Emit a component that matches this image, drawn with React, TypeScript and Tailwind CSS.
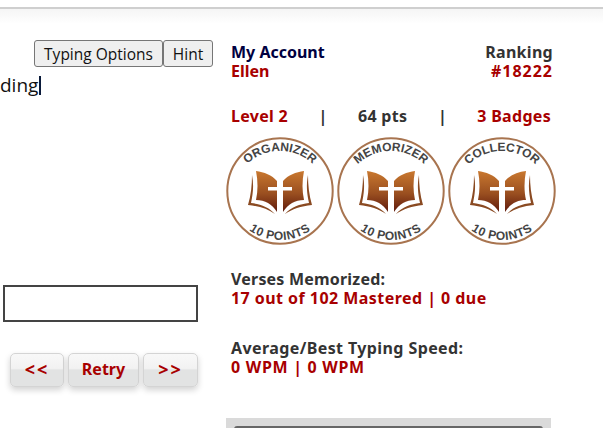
import React from 'react';

const Badge = ({ title, id }: { title: string; id: string }) => (
  <svg width="108" height="108" viewBox="0 0 108 108" className="shrink-0">
    <defs>
      <linearGradient id={`book-${id}`} x1="0" y1="0" x2="0" y2="1">
        <stop offset="0" stopColor="#c9782f" />
        <stop offset="0.55" stopColor="#9a4f20" />
        <stop offset="1" stopColor="#5f1a0c" />
      </linearGradient>
      <path id={`top-${id}`} d="M 6 62 A 48 48 0 0 1 102 62" />
      <path id={`bot-${id}`} d="M 1 50 A 53 53 0 0 0 107 50" />
    </defs>
    <circle cx="54" cy="54" r="52.7" fill="#fff" stroke="#a8744f" strokeWidth="2" />
    <text fontFamily="'Liberation Sans', sans-serif" fontSize="12" fill="#444">
      <textPath href={`#top-${id}`} startOffset="50%" textAnchor="middle">{title}</textPath>
    </text>
    <text fontFamily="'Liberation Sans', sans-serif" fontSize="12" letterSpacing="0.5" fill="#444">
      <textPath href={`#bot-${id}`} startOffset="50%" textAnchor="middle">10 POINTS</textPath>
    </text>
    {/* open book */}
    <path d="M 51 44 C 46 38 38 35 30 34 C 32 44 32 54 30 63 C 39 63 46 67 51 75 Z" fill={`url(#book-${id})`} />
    <path d="M 57 44 C 62 38 70 35 78 34 C 76 44 76 54 78 63 C 69 63 62 67 57 75 Z" fill={`url(#book-${id})`} />
    <path d="M 26 38 C 28 48 27 57 25 66 C 34 67 43 70 49 77 C 42 72 33 69 22 68 C 25 58 26 48 26 38 Z" fill="#8a4a22" />
    <path d="M 82 38 C 80 48 81 57 83 66 C 74 67 65 70 59 77 C 66 72 75 69 86 68 C 83 58 82 48 82 38 Z" fill="#8a4a22" />
    <rect x="52" y="43" width="4" height="29" fill="#fff" />
    <rect x="42" y="50" width="24" height="3.5" fill="#fff" />
  </svg>
);

const NavButton = ({ label, className }: { label: string; className: string }) => (
  <button className={`h-[34px] rounded-[5px] border border-[#d4d4d4] bg-[linear-gradient(#f8f8f8_0%,#f2f2f2_45%,#e2e3e3_50%,#e2e3e3_100%)] pb-[2px] text-[#a80000] font-bold shadow-[0_3px_6px_rgba(0,0,0,0.18)] ${className}`}>
    {label}
  </button>
);

export default function App() {
  return (
    <div className="h-[428px] w-[603px] overflow-hidden bg-white font-['Noto_Sans',sans-serif]">
      <div className="h-[24px] border-t-[7px] border-white">
        <div className="h-[17px] border-t-2 border-[#cfcfcf] bg-gradient-to-b from-[#f5f5f5] to-white" />
      </div>

      <div className="flex">
        <div className="w-[213px] shrink-0 pt-[16px]">
          <div className="flex justify-end font-['Open_Sans',sans-serif] text-[15.5px] text-[#111]">
            <button className="h-[27px] w-[129px] rounded-[3px] border border-[#767676] bg-[#efefef] pt-[2px]">Typing Options</button>
            <button className="h-[27px] w-[50px] rounded-[3px] border border-[#767676] bg-[#efefef] pt-[2px]">Hint</button>
          </div>
          <div className="mt-[6px] flex h-[24px] items-center font-['Open_Sans',sans-serif] text-[19px] leading-none text-[#111]">
            ding<span className="ml-px h-[19px] w-[2px] bg-[#0a1a3a]" />
          </div>
          <div className="ml-[3px] mt-[188px] h-[37px] w-[195px] border-2 border-[#444]" />
          <div className="ml-[10px] mt-[31px] flex gap-[4px]">
            <NavButton label="<<" className="w-[54px] text-[18px] tracking-[2px]" />
            <NavButton label="Retry" className="w-[71px] text-[16px]" />
            <NavButton label=">>" className="w-[55px] text-[18px] tracking-[2px]" />
          </div>
        </div>

        <div className="ml-[13px] w-[325px] pt-[19px] text-[16px] leading-[19px] font-bold">
          <div className="-mr-[2px] flex justify-between pl-[5px]">
            <div>
              <div className="text-[#000040]">My Account</div>
              <div className="text-[#a80000]">Ellen</div>
            </div>
            <div className="text-right">
              <div className="tracking-[0.3px] text-[#333]">Ranking</div>
              <div className="tracking-[1px] text-[#a80000]">#18222</div>
            </div>
          </div>

          <div className="mt-[26px] flex justify-between pl-[5px]">
            <span className="tracking-[0.3px] text-[#a80000]">Level 2</span>
            <span className="text-[#333]">|</span>
            <span className="tracking-[0.3px] text-[#333]">64 pts</span>
            <span className="text-[#333]">|</span>
            <span className="tracking-[0.3px] text-[#a80000]">3 Badges</span>
          </div>

          <div className="mt-[11px] flex gap-[3px]">
            <Badge title="ORGANIZER" id="a" />
            <Badge title="MEMORIZER" id="b" />
            <Badge title="COLLECTOR" id="c" />
          </div>

          <div className="mt-[25px] pl-[5px]">
            <div className="tracking-[0.2px] text-[#333]">Verses Memorized:</div>
            <div className="tracking-[0.45px] text-[#a80000]">17 out of 102 Mastered | 0 due</div>
          </div>

          <div className="mt-[31px] pl-[5px]">
            <div className="tracking-[0.4px] text-[#333]">Average/Best Typing Speed:</div>
            <div className="tracking-[0.7px] text-[#a80000]">0 WPM | 0 WPM</div>
          </div>

          <div className="mt-[41px] h-[20px] bg-[#dadada] px-[8px] pt-[8px]">
            <div className="h-[3px] rounded-t-sm bg-[#666]" />
          </div>
        </div>
      </div>
    </div>
  );
}
